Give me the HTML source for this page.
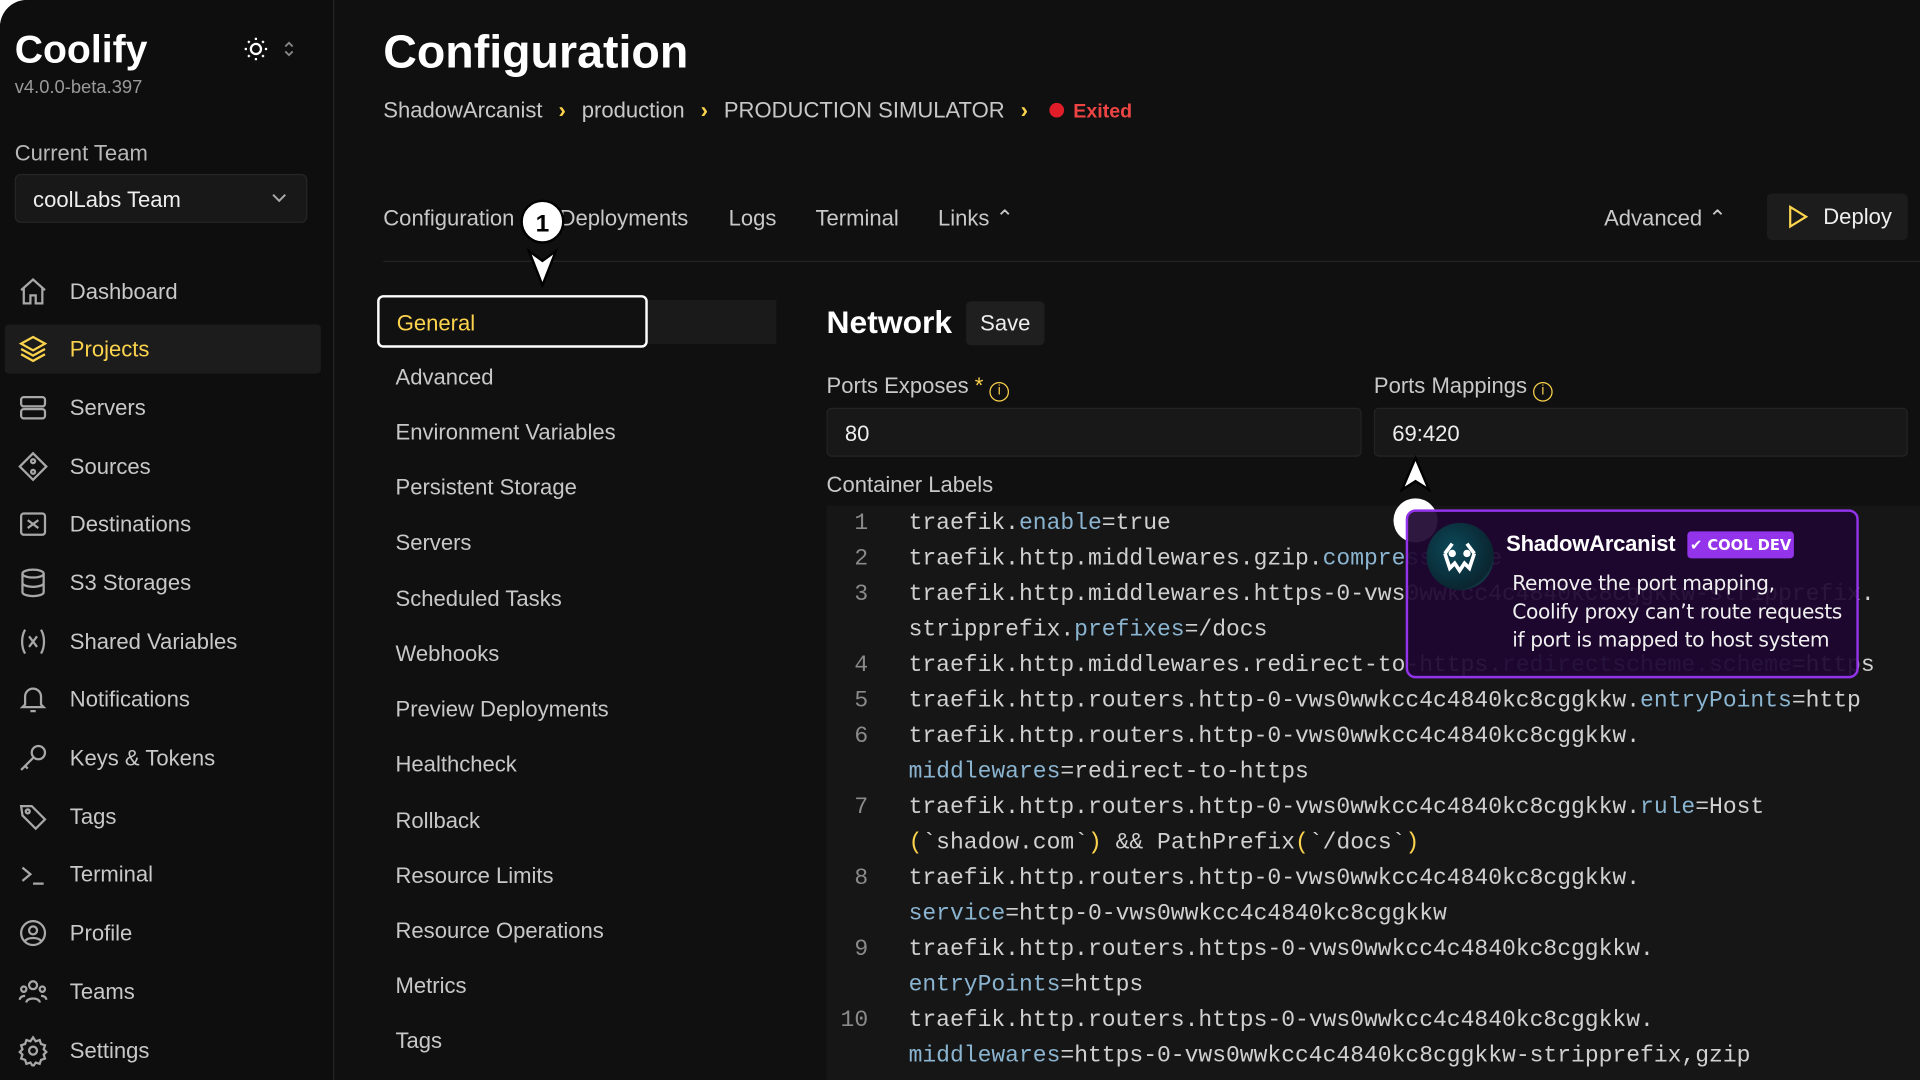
<!DOCTYPE html>
<html><head><meta charset="utf-8"><style>
*{box-sizing:border-box;margin:0;padding:0}
html,body{width:1920px;height:1080px;overflow:hidden;background:#fff}
#w{width:1568px;height:882px;transform:scale(1.22449);transform-origin:0 0;position:relative;background:#101010;font-family:"Liberation Sans",sans-serif;color:#e5e5e5;border-radius:22px 0 0 0;overflow:hidden}
.a{position:absolute}
.side{left:0;top:0;width:273px;height:882px;background:#0e0e0e;border-right:1px solid #242424}
.nav{left:14px;font-size:18px;color:#c8c8c8;height:40px;display:flex;align-items:center}
.nav svg{width:26px;height:26px;margin-right:17px;stroke:#a8a8a8;fill:none;stroke-width:1.7}
.sub{left:323px;font-size:18px;color:#c8c8c8}
.tab{top:168px;font-size:18px;color:#c8c8c8}
.code{left:675px;top:413px;width:893px;height:469px;background:#161616;font-family:"Liberation Mono",monospace;font-size:18.8px;color:#d0d0d0}
.ln{position:absolute;left:0;width:34px;text-align:right;color:#8a8a8a}
.cl{position:absolute;left:67px;white-space:pre}
.k{color:#8ab4d0}
</style></head><body><div id="w">
<div class="a side"></div>
<div class="a" style="left:12px;top:22px;font-size:32px;font-weight:bold;color:#fff">Coolify</div>
<div class="a" style="left:12px;top:63px;font-size:15px;color:#9a9a9a">v4.0.0-beta.397</div>
<svg class="a" style="left:198px;top:29px" width="22" height="22" viewBox="0 0 24 24" fill="none" stroke="#fff" stroke-width="2"><circle cx="12" cy="12" r="4.5"/><path d="M12 2v2M12 20v2M2 12h2M20 12h2M5 5l1.4 1.4M17.6 17.6L19 19M5 19l1.4-1.4M17.6 6.4L19 5"/></svg>
<svg class="a" style="left:231px;top:32px" width="10" height="16" viewBox="0 0 10 16" fill="none" stroke="#888" stroke-width="1.5"><path d="M2 6l3-3 3 3M2 10l3 3 3-3"/></svg>
<div class="a" style="left:12px;top:115px;font-size:18px;color:#b8b8b8">Current Team</div>
<div class="a" style="left:12px;top:142px;width:239px;height:40px;background:#181818;border:1px solid #262626;border-radius:5px;font-size:18px;color:#eee;padding:10px 14px">coolLabs Team</div>
<svg class="a" style="left:220px;top:156px" width="16" height="12" viewBox="0 0 16 12" fill="none" stroke="#aaa" stroke-width="1.6"><path d="M3 3l5 5 5-5"/></svg>
<div class="a" style="left:4px;top:265px;width:258px;height:40px;background:#1c1c1c;border-radius:3px"></div>
<div class="a nav" style="top:218px"><svg viewBox="0 0 24 24"><path d="M3 11L12 3l9 8M5 9v12h5v-6h4v6h5V9"/></svg>Dashboard</div>
<div class="a nav" style="top:265px;color:#fcd34d"><svg viewBox="0 0 24 24" style="stroke:#fcd34d"><path d="M12 3l9 5-9 5-9-5zM3 12l9 5 9-5M3 16l9 5 9-5"/></svg>Projects</div>
<div class="a nav" style="top:313px"><svg viewBox="0 0 24 24"><rect x="3" y="4" width="18" height="7" rx="2"/><rect x="3" y="13" width="18" height="7" rx="2"/></svg>Servers</div>
<div class="a nav" style="top:361px"><svg viewBox="0 0 24 24"><path d="M12 2l10 10-10 10L2 12z"/><circle cx="12" cy="8" r="1.5"/><circle cx="12" cy="16" r="1.5"/></svg>Sources</div>
<div class="a nav" style="top:408px"><svg viewBox="0 0 24 24"><rect x="3" y="4" width="18" height="16" rx="2"/><path d="M8 9l8 6M16 9l-8 6"/></svg>Destinations</div>
<div class="a nav" style="top:456px"><svg viewBox="0 0 24 24"><ellipse cx="12" cy="5" rx="8" ry="3"/><path d="M4 5v14c0 1.7 3.6 3 8 3s8-1.3 8-3V5M4 12c0 1.7 3.6 3 8 3s8-1.3 8-3"/></svg>S3 Storages</div>
<div class="a nav" style="top:504px"><svg viewBox="0 0 24 24"><path d="M6 3c-3 5-3 13 0 18M18 3c3 5 3 13 0 18M9 8l6 8M15 8l-6 8"/></svg>Shared Variables</div>
<div class="a nav" style="top:551px"><svg viewBox="0 0 24 24"><path d="M6 16V10a6 6 0 0112 0v6l2 2H4zM10 21h4"/></svg>Notifications</div>
<div class="a nav" style="top:599px"><svg viewBox="0 0 24 24"><circle cx="16" cy="8" r="5"/><path d="M12 12l-9 9M6 18l2 2"/></svg>Keys &amp; Tokens</div>
<div class="a nav" style="top:647px"><svg viewBox="0 0 24 24"><path d="M3 4h8l10 10-7 7L4 11z"/><circle cx="8" cy="8" r="1.5"/></svg>Tags</div>
<div class="a nav" style="top:694px"><svg viewBox="0 0 24 24"><path d="M4 7l6 5-6 5M12 19h8"/></svg>Terminal</div>
<div class="a nav" style="top:742px"><svg viewBox="0 0 24 24"><circle cx="12" cy="12" r="9"/><circle cx="12" cy="10" r="3"/><path d="M6 18c2-3 10-3 12 0"/></svg>Profile</div>
<div class="a nav" style="top:790px"><svg viewBox="0 0 24 24"><circle cx="12" cy="7" r="3"/><circle cx="5" cy="10" r="2"/><circle cx="19" cy="10" r="2"/><path d="M7 20c0-4 10-4 10 0M2 18c0-2 2-3 4-3M22 18c0-2-2-3-4-3"/></svg>Teams</div>
<div class="a nav" style="top:838px"><svg viewBox="0 0 24 24"><circle cx="12" cy="12" r="3"/><path d="M12 2l2 3 3-1 1 3 3 1-1 3 2 2-2 2 1 3-3 1-1 3-3-1-2 3-2-3-3 1-1-3-3-1 1-3-2-2 2-2-1-3 3-1 1-3 3 1z"/></svg>Settings</div>

<div class="a" style="left:313px;top:22px;font-size:38px;font-weight:bold;color:#fff">Configuration</div>
<div class="a" style="left:313px;top:80px;font-size:18px;color:#c8c8c8;white-space:nowrap">ShadowArcanist <span style="color:#fcd34d;margin:0 8px;font-weight:bold">›</span> production <span style="color:#fcd34d;margin:0 8px;font-weight:bold">›</span> PRODUCTION SIMULATOR <span style="color:#fcd34d;margin:0 8px;font-weight:bold">›</span> <span style="display:inline-block;width:12px;height:12px;border-radius:50%;background:#e11d2a;margin:0 8px 0 4px"></span><span style="color:#ef4444;font-weight:bold;font-size:16px">Exited</span></div>
<div class="a tab" style="left:313px">Configuration</div>
<div class="a tab" style="left:457px">Deployments</div>
<div class="a tab" style="left:595px">Logs</div>
<div class="a tab" style="left:666px">Terminal</div>
<div class="a tab" style="left:766px">Links ⌃</div>
<div class="a tab" style="left:1310px">Advanced ⌃</div>
<div class="a" style="left:1443px;top:158px;width:115px;height:38px;background:#1c1c1c;border-radius:4px;font-size:18px;color:#eee;padding:9px 0 0 46px">Deploy</div>
<svg class="a" style="left:1458px;top:167px" width="20" height="20" viewBox="0 0 20 20" fill="none" stroke="#fcd34d" stroke-width="1.8"><path d="M4 2l13 8-13 8z"/></svg>
<div class="a" style="left:313px;top:213px;width:1255px;height:1px;background:#242424"></div>
<div class="a" style="left:425px;top:163px;width:36px;height:36px;border-radius:50%;background:#fff;color:#000;font-weight:bold;font-size:20px;text-align:center;line-height:36px;border:2px solid #000">1</div>
<svg class="a" style="left:430px;top:203px" width="26" height="32" viewBox="0 0 26 32"><path d="M2 2l11 28L24 2l-11 8z" fill="#fff" stroke="#000" stroke-width="2"/></svg>

<div class="a" style="left:308px;top:245px;width:326px;height:36px;background:#1a1a1a"></div>
<div class="a" style="left:308px;top:241px;width:221px;height:43px;border:2px solid #fff;border-radius:5px;background:#111;font-size:18px;color:#fcd34d;padding:11px 14px">General</div>
<div class="a sub" style="top:298px">Advanced</div>
<div class="a sub" style="top:343px">Environment Variables</div>
<div class="a sub" style="top:388px">Persistent Storage</div>
<div class="a sub" style="top:433px">Servers</div>
<div class="a sub" style="top:479px">Scheduled Tasks</div>
<div class="a sub" style="top:524px">Webhooks</div>
<div class="a sub" style="top:569px">Preview Deployments</div>
<div class="a sub" style="top:614px">Healthcheck</div>
<div class="a sub" style="top:660px">Rollback</div>
<div class="a sub" style="top:705px">Resource Limits</div>
<div class="a sub" style="top:750px">Resource Operations</div>
<div class="a sub" style="top:795px">Metrics</div>
<div class="a sub" style="top:840px">Tags</div>

<div class="a" style="left:675px;top:248px;font-size:26px;font-weight:bold;color:#fff">Network</div>
<div class="a" style="left:789px;top:246px;width:64px;height:36px;background:#1f1f1f;border-radius:4px;font-size:18px;color:#eee;text-align:center;line-height:36px">Save</div>
<div class="a" style="left:675px;top:305px;font-size:18px;color:#c8c8c8">Ports Exposes <span style="color:#fcd34d">*</span> <span style="display:inline-block;width:16px;height:16px;border:1.5px solid #fcd34d;border-radius:50%;font-size:11px;text-align:center;line-height:13px;color:#fcd34d;vertical-align:-1px">i</span></div>
<div class="a" style="left:1122px;top:305px;font-size:18px;color:#c8c8c8">Ports Mappings <span style="display:inline-block;width:16px;height:16px;border:1.5px solid #fcd34d;border-radius:50%;font-size:11px;text-align:center;line-height:13px;color:#fcd34d;vertical-align:-1px">i</span></div>
<div class="a" style="left:675px;top:333px;width:437px;height:40px;background:#181818;border:1px solid #242424;border-radius:4px;font-size:18px;color:#eee;padding:10px 14px">80</div>
<div class="a" style="left:1122px;top:333px;width:436px;height:40px;background:#181818;border:1px solid #242424;border-radius:4px;font-size:18px;color:#eee;padding:10px 14px">69:420</div>
<div class="a" style="left:675px;top:386px;font-size:18px;color:#c8c8c8">Container Labels</div>

<div class="a code">
<div class="ln" style="top:3px">1</div><div class="cl" style="top:3px">traefik.<span class="k">enable</span>=true</div>
<div class="ln" style="top:32px">2</div><div class="cl" style="top:32px">traefik.http.middlewares.gzip.<span class="k">compress</span>=true</div>
<div class="ln" style="top:61px">3</div><div class="cl" style="top:61px">traefik.http.middlewares.https-0-vws0wwkcc4c4840kc8cggkkw-stripprefix.</div>
<div class="cl" style="top:90px">stripprefix.<span class="k">prefixes</span>=/docs</div>
<div class="ln" style="top:119px">4</div><div class="cl" style="top:119px">traefik.http.middlewares.redirect-to-https.<span class="k">redirectscheme.scheme</span>=https</div>
<div class="ln" style="top:148px">5</div><div class="cl" style="top:148px">traefik.http.routers.http-0-vws0wwkcc4c4840kc8cggkkw.<span class="k">entryPoints</span>=http</div>
<div class="ln" style="top:177px">6</div><div class="cl" style="top:177px">traefik.http.routers.http-0-vws0wwkcc4c4840kc8cggkkw.</div>
<div class="cl" style="top:206px"><span class="k">middlewares</span>=redirect-to-https</div>
<div class="ln" style="top:235px">7</div><div class="cl" style="top:235px">traefik.http.routers.http-0-vws0wwkcc4c4840kc8cggkkw.<span class="k">rule</span>=Host</div>
<div class="cl" style="top:264px"><span style="color:#fcd34d">(</span>`shadow.com`<span style="color:#fcd34d">)</span> &amp;&amp; PathPrefix<span style="color:#fcd34d">(</span>`/docs`<span style="color:#fcd34d">)</span></div>
<div class="ln" style="top:293px">8</div><div class="cl" style="top:293px">traefik.http.routers.http-0-vws0wwkcc4c4840kc8cggkkw.</div>
<div class="cl" style="top:322px"><span class="k">service</span>=http-0-vws0wwkcc4c4840kc8cggkkw</div>
<div class="ln" style="top:351px">9</div><div class="cl" style="top:351px">traefik.http.routers.https-0-vws0wwkcc4c4840kc8cggkkw.</div>
<div class="cl" style="top:380px"><span class="k">entryPoints</span>=https</div>
<div class="ln" style="top:409px">10</div><div class="cl" style="top:409px">traefik.http.routers.https-0-vws0wwkcc4c4840kc8cggkkw.</div>
<div class="cl" style="top:438px"><span class="k">middlewares</span>=https-0-vws0wwkcc4c4840kc8cggkkw-stripprefix,gzip</div>
</div>

<svg class="a" style="left:1142px;top:372px" width="28" height="30" viewBox="0 0 28 30"><path d="M14 2l11 26-11-7-11 7z" fill="#fff" stroke="#000" stroke-width="2"/></svg>
<div class="a" style="left:1138px;top:407px;width:36px;height:36px;border-radius:50%;background:#fff"></div>
<div class="a" style="left:1148px;top:416px;width:370px;height:138px;border:2px solid #9333ea;border-radius:8px;background:rgba(30,6,48,0.93)"></div>
<div class="a" style="left:1165px;top:427px;width:55px;height:55px;border-radius:50%;background:radial-gradient(circle at 40% 40%,#0c4a5a,#0a2530 70%,#3ab8cc 100%)"></div>
<svg class="a" style="left:1172px;top:434px" width="40" height="40" viewBox="0 0 40 40" fill="none" stroke="#fff" stroke-width="3"><path d="M8 18l6-8M32 18l-6-8M8 18l4 12 4-4 4 6 4-6 4 4 4-12"/><circle cx="14" cy="18" r="1.5" fill="#fff"/><circle cx="26" cy="18" r="1.5" fill="#fff"/></svg>
<div class="a" style="left:1230px;top:434px;font-size:18px;font-weight:bold;color:#fff;letter-spacing:-0.2px">ShadowArcanist</div>
<div class="a" style="left:1378px;top:434px;width:87px;height:22px;background:#9333ea;border-radius:3px;font-size:12px;font-weight:bold;color:#fff;text-align:center;line-height:22px;font-family:'DejaVu Sans',sans-serif">✔ COOL DEV</div>
<div class="a" style="left:1235px;top:465px;font-size:16.5px;line-height:23px;color:#f0f0f0;font-family:'DejaVu Sans',sans-serif;letter-spacing:-0.3px;white-space:nowrap">Remove the port mapping,<br>Coolify proxy can’t route requests<br>if port is mapped to host system</div>
</div></body></html>
